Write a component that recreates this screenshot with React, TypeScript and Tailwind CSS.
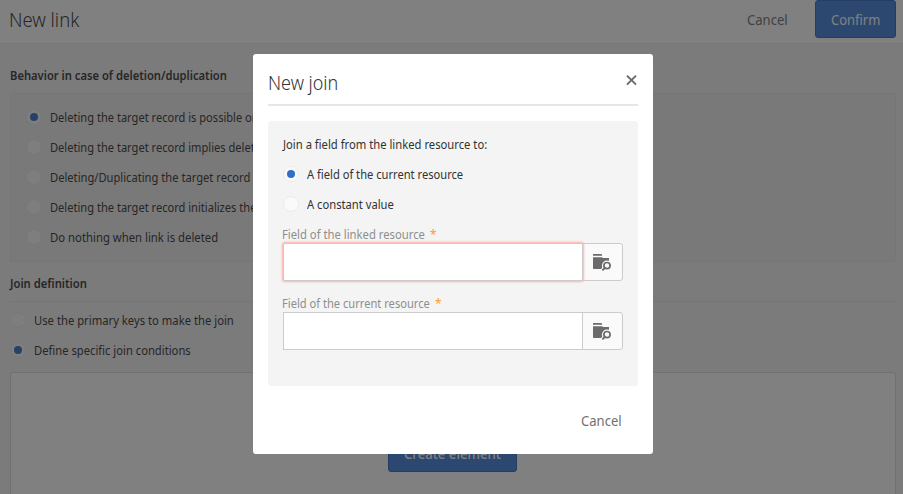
import { useLayoutEffect, useRef, useState } from 'react';

const FACE = "font-['Noto_Sans','Open_Sans',sans-serif]";

/* Condensed single-line text: squeezed to `width`, or by the default ratio. */
function Txt({ children, width, className = '' }: { children: string; width?: number; className?: string }) {
  const ref = useRef<HTMLSpanElement>(null);
  const [natural, setNatural] = useState(0);
  useLayoutEffect(() => {
    if (ref.current) setNatural(ref.current.offsetWidth);
  }, [children]);
  const scale = natural ? (width ? width / natural : 0.853) : 1;
  return (
    <span className={`block shrink-0 whitespace-nowrap ${className}`} style={{ width: natural ? natural * scale : undefined }}>
      <span ref={ref} className="inline-block origin-left" style={{ transform: `scaleX(${scale})` }}>
        {children}
      </span>
    </span>
  );
}

function Radio({ label, checked = false, width }: { label: string; checked?: boolean; width?: number }) {
  return (
    <label className="flex h-5 items-center gap-[7.5px]">
      <span className="flex size-4 shrink-0 items-center justify-center rounded-full border border-[#ececec] bg-[#fafafa]">
        {checked && <span className="size-2 rounded-full bg-[#326ec8]" />}
      </span>
      <Txt width={width} className="text-[13px] leading-5 text-[#323232]">{label}</Txt>
    </label>
  );
}

function FolderSearch() {
  return (
    <svg width="20" height="18" viewBox="0 0 20 18" className="block">
      <path d="M1 1h8.5l.8 1.7H1zM1 4.3h9.5V5H17v10.2a.7.7 0 0 1-.7.7H1.7a.7.7 0 0 1-.7-.7z" fill="#6b6b6b" />
      <circle cx="15" cy="12.6" r="5.1" fill="#fafafa" />
      <path d="m12.8 14.8-2.6 2.8" stroke="#fafafa" strokeWidth="4" />
      <circle cx="15" cy="12.6" r="3.1" fill="none" stroke="#6b6b6b" strokeWidth="1.7" />
      <path d="m12.8 14.8-1.9 2" stroke="#6b6b6b" strokeWidth="1.9" strokeLinecap="round" />
    </svg>
  );
}

function Field({ label, width, invalid = false }: { label: string; width: number; invalid?: boolean }) {
  return (
    <div>
      <div className="flex h-[18px] gap-[5px] leading-[18px]">
        <Txt width={width} className="-ml-px text-[13px] text-[#8e8e8e]">{label}</Txt>
        <span className="pt-px text-[12px] text-[#ff9a2e]">*</span>
      </div>
      <div className="flex h-[38px]">
        <input
          className={`relative h-[38px] w-[300px] border border-[#cccccc] bg-white outline-none ${invalid ? 'z-10 rounded-[2px] shadow-[0_0_2px_1px_#ffb0aa]' : ''}`}
        />
        <button className="-ml-px flex h-[38px] w-[41px] items-center rounded-r-[3px] border border-[#cccccc] bg-[#fafafa] pl-[9px]">
          <FolderSearch />
        </button>
      </div>
    </div>
  );
}

export default function App() {
  return (
    <div className={`relative h-[494px] w-[903px] overflow-hidden bg-[#f4f4f4] ${FACE}`}>
      <header className="flex h-[44px] items-start justify-between border-b border-[#e8e8e8] bg-white pl-[9px] pr-[7px]">
        <Txt width={70} className="pt-[5.5px] text-[20px] font-light leading-7 text-[#323232]">New link</Txt>
        <div className="flex items-start">
          <Txt width={41} className="mr-[27px] pt-[10px] text-[14px] leading-5 text-[#707070]">Cancel</Txt>
          <button className="flex h-[38px] w-[81px] justify-center rounded-[3px] border border-[#2c66c0] bg-[#4080db] pt-[9px] text-white">
            <Txt width={49} className="text-[14px] leading-5">Confirm</Txt>
          </button>
        </div>
      </header>

      <main className="flex flex-col pl-[10px] pr-[7px] pt-[21px]">
        <Txt width={217} className="text-[13px] font-semibold leading-5 text-[#323232]">
          Behavior in case of deletion/duplication
        </Txt>
        <section className="mt-2 flex h-[169px] flex-col gap-[10px] overflow-hidden rounded-[2px] border border-[#e8e8e8] bg-[#eeeeee] pl-[15px] pt-[13px]">
          <Radio checked label="Deleting the target record is possible only" />
          <Radio label="Deleting the target record implies deleting" />
          <Radio label="Deleting/Duplicating the target record" width={200} />
          <Radio label="Deleting the target record initializes the" />
          <Radio label="Do nothing when link is deleted" width={168} />
        </section>
        <Txt width={77} className="mt-[11px] text-[13px] font-semibold leading-5 text-[#323232]">Join definition</Txt>
        <div className="mt-2 h-px bg-[#e6e6e6]" />
        <div className="mt-[8px] flex flex-col gap-[10px]">
          <Radio label="Use the primary keys to make the join" width={200} />
          <Radio checked label="Define specific join conditions" width={157} />
        </div>
        <section className="mt-[12px] flex h-[140px] justify-center rounded-[3px] border border-[#dcdcdc] bg-white pr-[2px] pt-[61px]">
          <button className="flex h-[38px] w-[129px] justify-center rounded-[3px] border border-[#2c66c0] bg-[#4080db] pl-px pt-[9px] text-white">
            <Txt width={97} className="text-[14px] font-medium leading-5">Create element</Txt>
          </button>
        </section>
      </main>

      <div className="absolute inset-0 flex justify-center bg-[#1c1c1c]/56 pl-[3px] pt-[54px]">
        <div role="dialog" className="flex size-[400px] flex-col rounded-[3px] bg-white px-[15px]">
          <div className="flex h-[52px] items-start justify-between border-b-2 border-[#e6e6e6]">
            <Txt width={70} className="-ml-[0.5px] pt-[14.5px] text-[20px] font-light leading-7 text-[#323232]">New join</Txt>
            <button aria-label="Close" className="mt-[20px]">
              <svg width="13" height="12" viewBox="0 0 13 12" className="block">
                <path d="m2 1.6 9 9m0-9-9 9" stroke="#6b6b6b" strokeWidth="2" />
              </svg>
            </button>
          </div>
          <section className="mt-[15px] h-[265px] rounded-[3px] bg-[#f4f4f4] pl-[15px] pt-[13px]">
            <Txt width={204} className="text-[13px] leading-5 text-[#323232]">Join a field from the linked resource to:</Txt>
            <div className="mt-[10px] flex flex-col gap-[10px]">
              <Radio checked label="A field of the current resource" width={156} />
              <Radio label="A constant value" width={87} />
            </div>
            <div className="-mt-px flex flex-col gap-[13px] pt-[12px]">
              <Field label="Field of the linked resource" width={143} invalid />
              <Field label="Field of the current resource" width={148} />
            </div>
          </section>
          <div className="flex justify-end pr-4 pt-[25px]">
            <button><Txt width={41} className="text-[14px] leading-5 text-[#707070]">Cancel</Txt></button>
          </div>
        </div>
      </div>
    </div>
  );
}
